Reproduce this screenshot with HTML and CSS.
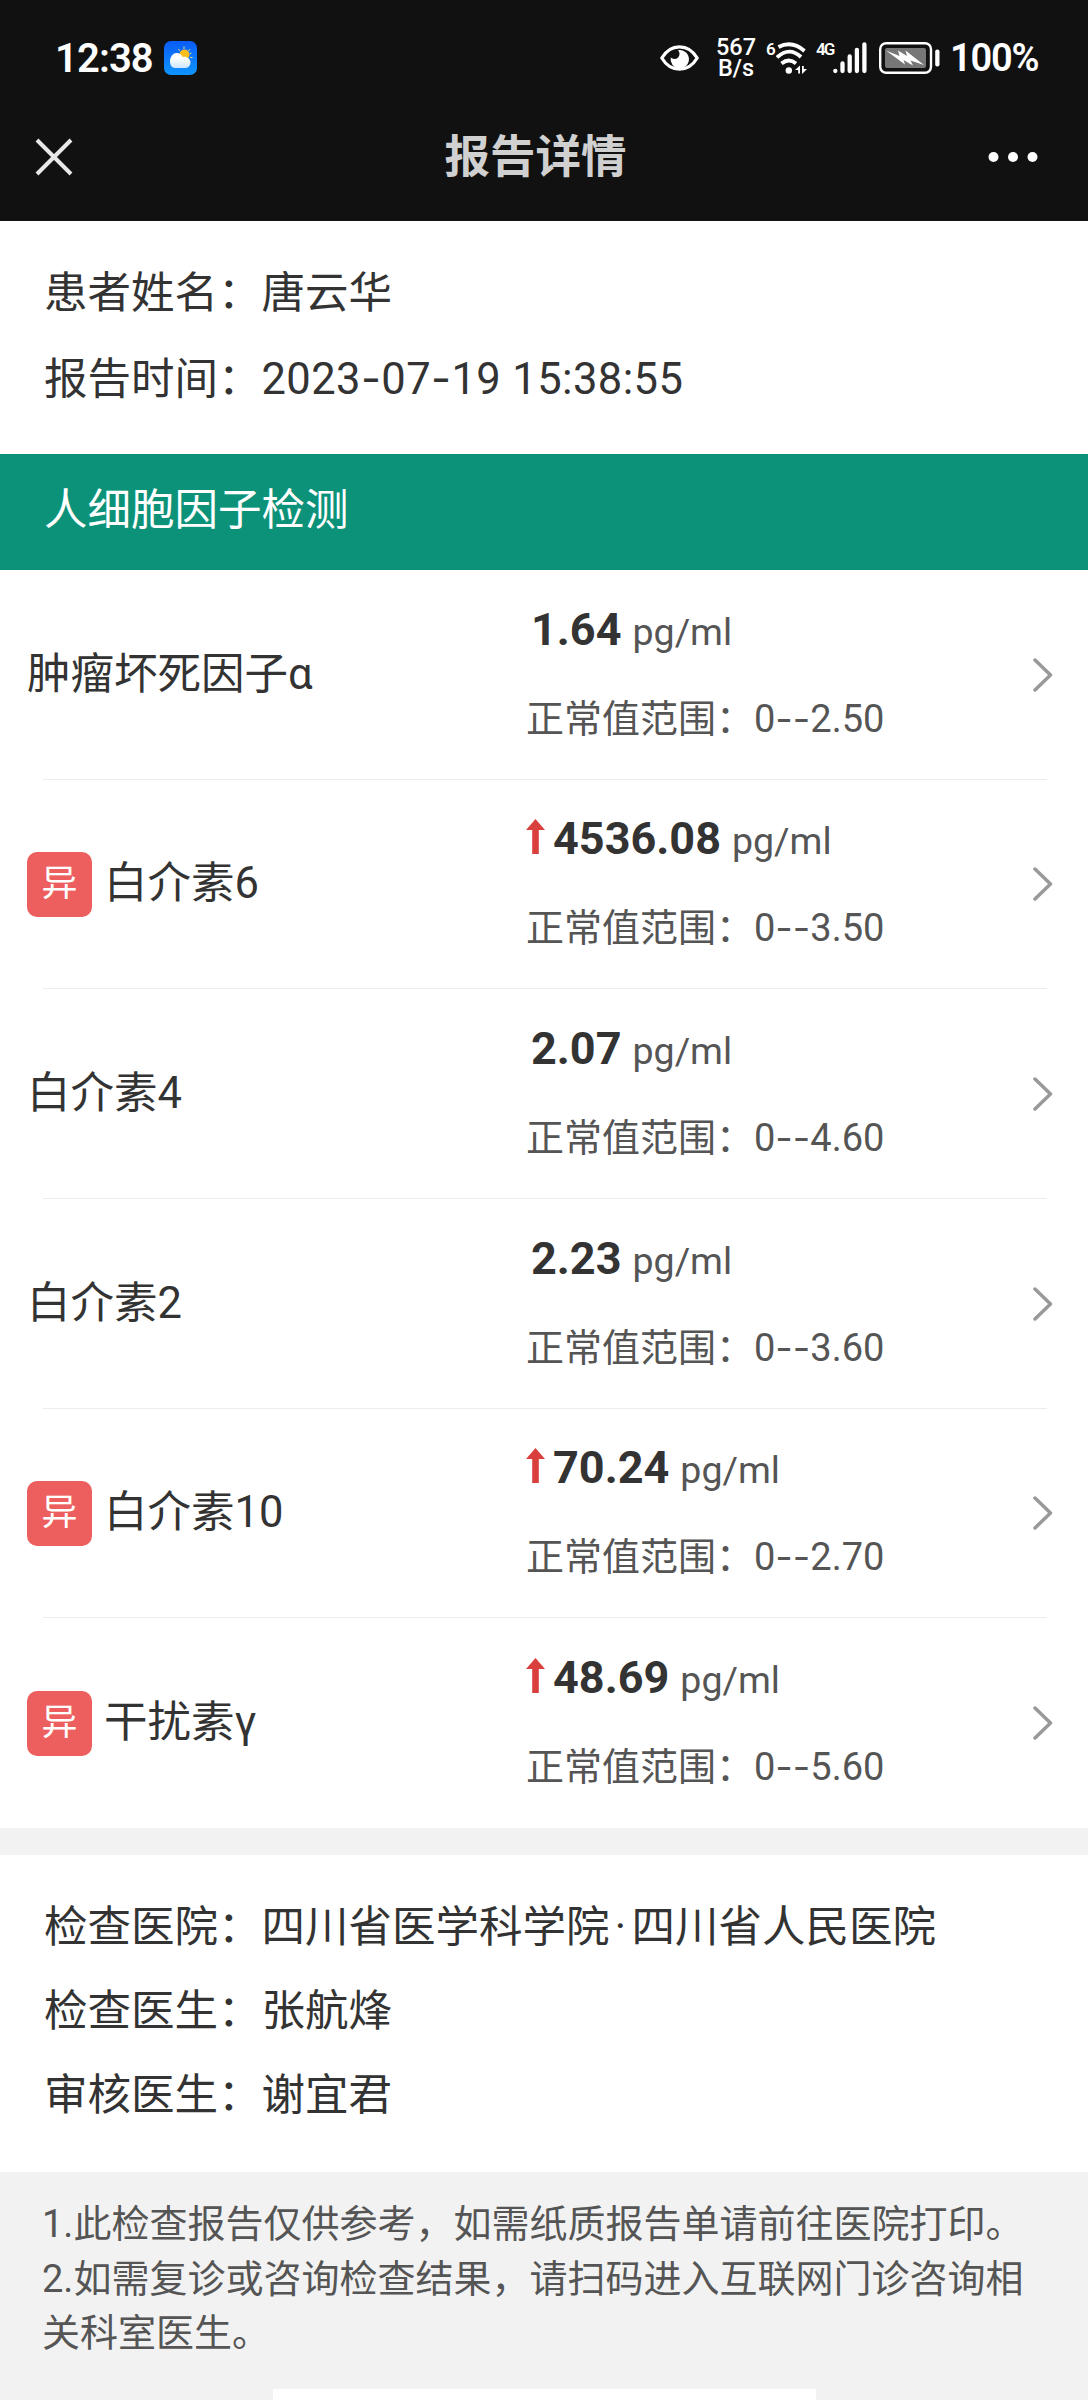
FILE: index.html
```html
<!DOCTYPE html>
<html lang="zh-CN">
<head>
<meta charset="utf-8">
<title>报告详情</title>
<link rel="stylesheet" href="styles.css">
</head>
<body>
<header class="top">
  <div class="status">
    <span class="clock">12:38</span>
    <svg class="weather" viewBox="0 0 33 34">
      <defs>
        <linearGradient id="sky" x1="0" y1="0" x2="0" y2="1"><stop offset="0" stop-color="#0a5cf5"/><stop offset="1" stop-color="#0f95ff"/></linearGradient>
        <linearGradient id="cloud" x1="0" y1="0" x2="0" y2="1"><stop offset="0.3" stop-color="#fff"/><stop offset="1" stop-color="#cfe6fb"/></linearGradient>
      </defs>
      <rect width="33" height="34" rx="7" fill="url(#sky)"/>
      <path d="M20 5.5v2.4M14.3 8l1.5 1.8M26 8.2l-1.6 1.9M28.5 16.5h-2.4M27.5 12l-1.8.8" stroke="#e8dc86" stroke-width="1" fill="none"/>
      <circle cx="20.500" cy="13.500" r="5" fill="#fcbf1e"/>
      <path d="M11.500 27C8 27 6 24.300 6 20.500S8.500 12 12.500 12C15.500 12 17.500 13.500 18.300 16 22.500 15 26.500 17.500 26.500 21.500 26.500 25 24 27 21 27z" fill="url(#cloud)"/>
    </svg>
    <div class="indicators">
      <svg class="eye" viewBox="0 0 39 26">
        <path d="M1.800 13C6 6 12 1.800 19.500 1.800S33 6 37.200 13C33 20 27 24.200 19.500 24.200S6 20 1.800 13z" fill="none" stroke="#fff" stroke-width="3.200" stroke-linejoin="round"/>
        <path d="M18 5.200A9.200 9.200 0 1 1 10.700 12.600A4.600 4.600 0 1 0 18 5.200z" fill="#fff"/>
      </svg>
      <div class="speed"><span>567</span><span>B/s</span></div>
      <div class="net wifi"><span>6</span>
        <svg viewBox="0 0 32 32">
          <g fill="none" stroke="#fff" stroke-width="3.800">
            <path d="M2.500 5Q16-2 28.500 9"/>
            <path d="M1 15.500Q13 4 25 15"/>
            <path d="M5.500 21.500Q13 15.500 20 21.500"/>
          </g>
          <circle cx="12.800" cy="28.500" r="3.200" fill="#fff"/>
          <path d="M19 28l5-4.500V31.500h-1.800V28zM31 27l-5 5V24h1.800v3z" fill="#fff"/>
        </svg>
      </div>
      <div class="net cell"><span>4G</span>
        <svg viewBox="0 0 34 32"><path d="M2.300 28.800v.2M9.500 21.500V29M16.700 14.500V29M23.900 7.800V29M31.400 2.300V29" stroke="#fff" stroke-width="4.300" stroke-linecap="round"/></svg>
      </div>
      <svg class="battery" viewBox="0 0 61 32">
        <rect x="1.200" y="1.200" width="50.800" height="29.600" rx="6" fill="none" stroke="#fff" stroke-width="2.400"/>
        <rect x="6" y="6" width="41" height="20" rx="2" fill="#777"/>
        <path d="M7 8.500L20.500 14 19 8.500 28 14 26.500 8.500 45 23 31.500 18.500 34 23.500 24.500 18 26 22.500z" fill="#fff"/>
        <rect x="56.200" y="7.500" width="4.300" height="17" rx="2" fill="#fff"/>
      </svg>
      <span class="percent">100%</span>
    </div>
  </div>
  <nav class="navbar">
    <svg class="close" viewBox="0 0 38 38"><path d="M2 2L36 36M36 2L2 36" stroke="#e8e8e8" stroke-width="4"/></svg>
    <h1>报告详情</h1>
    <svg class="more" viewBox="0 0 50 10"><g fill="#fff"><circle cx="5.500" cy="5" r="5"/><circle cx="25" cy="5" r="5"/><circle cx="44.500" cy="5" r="5"/></g></svg>
  </nav>
</header>

<section class="info patient">
  <p>患者姓名：唐云华</p>
  <p>报告时间：<span class="date">2023<i>-</i>07<i>-</i>19 15:38:55</span></p>
</section>

<h2 class="group">人细胞因子检测</h2>

<ul class="results">
  <li>
    <div class="name">肿瘤坏死因子α</div>
    <div class="data"><div class="value plain"><b>1.64</b><span>pg/ml</span></div><div class="range">正常值范围：0<i>--</i>2.50</div></div>
    <svg class="chevron" viewBox="0 0 20 34"><path d="M2 2L17.500 17 2 32"/></svg>
  </li>
  <li>
    <div class="name"><em>异</em>白介素6</div>
    <div class="data"><div class="value"><svg class="up" viewBox="0 0 19 35"><path d="M9.500 0L19 11H12.800V35H6.200V11H0z"/></svg><b>4536.08</b><span>pg/ml</span></div><div class="range">正常值范围：0<i>--</i>3.50</div></div>
    <svg class="chevron" viewBox="0 0 20 34"><path d="M2 2L17.500 17 2 32"/></svg>
  </li>
  <li>
    <div class="name">白介素4</div>
    <div class="data"><div class="value plain"><b>2.07</b><span>pg/ml</span></div><div class="range">正常值范围：0<i>--</i>4.60</div></div>
    <svg class="chevron" viewBox="0 0 20 34"><path d="M2 2L17.500 17 2 32"/></svg>
  </li>
  <li>
    <div class="name">白介素2</div>
    <div class="data"><div class="value plain"><b>2.23</b><span>pg/ml</span></div><div class="range">正常值范围：0<i>--</i>3.60</div></div>
    <svg class="chevron" viewBox="0 0 20 34"><path d="M2 2L17.500 17 2 32"/></svg>
  </li>
  <li>
    <div class="name"><em>异</em>白介素10</div>
    <div class="data"><div class="value"><svg class="up" viewBox="0 0 19 35"><path d="M9.500 0L19 11H12.800V35H6.200V11H0z"/></svg><b>70.24</b><span>pg/ml</span></div><div class="range">正常值范围：0<i>--</i>2.70</div></div>
    <svg class="chevron" viewBox="0 0 20 34"><path d="M2 2L17.500 17 2 32"/></svg>
  </li>
  <li>
    <div class="name"><em>异</em>干扰素γ</div>
    <div class="data"><div class="value"><svg class="up" viewBox="0 0 19 35"><path d="M9.500 0L19 11H12.800V35H6.200V11H0z"/></svg><b>48.69</b><span>pg/ml</span></div><div class="range">正常值范围：0<i>--</i>5.60</div></div>
    <svg class="chevron" viewBox="0 0 20 34"><path d="M2 2L17.500 17 2 32"/></svg>
  </li>
</ul>

<section class="info hospital">
  <p>检查医院：四川省医学科学院<span class="dot">·</span>四川省人民医院</p>
  <p>检查医生：张航烽</p>
  <p>审核医生：谢宜君</p>
</section>

<footer class="notes">
  <p>1.此检查报告仅供参考，如需纸质报告单请前往医院打印。</p>
  <p>2.如需复诊或咨询检查结果，请扫码进入互联网门诊咨询相关科室医生。</p>
  <div class="code"></div>
</footer>
</body>
</html>
```
FILE: styles.css
```css
* { box-sizing: border-box; margin: 0; padding: 0; }
body {
  width: 1088px;
  height: 2400px;
  display: flex;
  flex-direction: column;
  background: #fff;
  color: #333;
  font-family: Roboto, "Noto Sans CJK SC", sans-serif;
  font-size: 43.5px;
}
svg { display: block; flex: none; }
i { font-family: Inter, sans-serif; font-style: normal; }

.top { height: 221px; flex: none; background: #111; color: #fff; }
.status { height: 116px; display: flex; align-items: center; padding: 0 50px 0 55px; }
.clock { width: 109px; font-size: 40px; font-weight: 600; letter-spacing: -0.9px; white-space: nowrap; }
.weather { width: 33px; height: 34px; }
.indicators { margin-left: auto; display: flex; align-items: center; }
.eye { width: 39px; height: 26px; }
.speed {
  width: 42px; margin-left: 16px;
  display: flex; flex-direction: column; align-items: center;
  font-size: 23.5px; font-weight: 500; line-height: 21px;
}
.net { display: flex; align-items: flex-start; font-size: 19px; font-weight: 600; line-height: 15px; }
.wifi { margin-left: 11px; width: 40px; }
.wifi span { width: 8px; margin-left: -2px; margin-right: 2px; font-size: 17px; }
.wifi svg { width: 32px; height: 32px; }
.cell { margin-left: 8px; width: 51px; }
.cell span { width: 17px; font-size: 17px; letter-spacing: -2px; }
.cell svg { width: 34px; height: 32px; }
.battery { width: 61px; height: 32px; margin-left: 12px; }
.percent { width: 88px; margin-left: 10px; font-size: 38px; font-weight: 600; letter-spacing: -1.2px; white-space: nowrap; }

.navbar {
  height: 82px; padding: 0 50px 0 35px;
  display: grid; grid-template-columns: 1fr auto 1fr; align-items: center;
}
.navbar h1 { font-size: 45.5px; font-weight: 700; line-height: 60px; color: #d0d0d0; padding-top: 2px; margin: 0 2px 0 0; }
.close { width: 38px; height: 38px; }
.more { width: 50px; height: 10px; justify-self: end; }

.info { flex: none; padding-left: 44px; }
.info p { height: 84px; line-height: 84px; white-space: nowrap; }
.patient { height: 233px; padding-top: 31px; }
.date { letter-spacing: 0.4px; }

.group {
  flex: none; height: 116px; padding-left: 44px;
  background: #0d927a; color: #fff;
  font-size: 43.5px; font-weight: 400; line-height: 114px;
}

.results { flex: none; height: 1258px; display: grid; grid-template-rows: repeat(6, 1fr); list-style: none; }
.results li {
  display: grid; grid-template-columns: 499px 1fr auto; align-items: center;
  padding: 0 35px 0 27px;
  background: linear-gradient(#ececec, #ececec) 43px 100% / 1004px 1px no-repeat;
}
.results li:last-child { background: none; }
.name { display: flex; align-items: center; line-height: 60px; }
.name em {
  width: 65px; height: 65px; margin-right: 12px; border-radius: 10px;
  background: #ed5f5f; color: #fff;
  font-size: 36px; font-style: normal; line-height: 65px; text-align: center;
}
.data { padding-bottom: 2px; }
.value { display: flex; align-items: baseline; height: 60px; line-height: 60px; }
.value.plain { padding-left: 5px; }
.value b { font-size: 45px; }
.value span { margin-left: 11px; font-size: 37.5px; color: #555; }
.up { width: 19px; height: 35px; margin-right: 8px; fill: #d9403d; }
.range { margin-top: 28px; height: 60px; line-height: 60px; font-size: 38px; color: #555; white-space: nowrap; }
.chevron { width: 20px; height: 34px; fill: none; stroke: #999; stroke-width: 3.5; stroke-linecap: round; stroke-linejoin: round; }

.hospital { height: 344px; padding-top: 31px; border-top: 27px solid #f2f2f2; }
.dot { display: inline-block; width: 22px; text-align: center; }

.notes { flex: none; height: 228px; background: #f2f2f2; padding: 25px 42px 0; font-size: 38px; line-height: 54.7px; color: #555; }
.notes p { word-break: break-all; }
.code { width: 543px; height: 11px; margin: 28px auto 0; background: #fff; }
```
